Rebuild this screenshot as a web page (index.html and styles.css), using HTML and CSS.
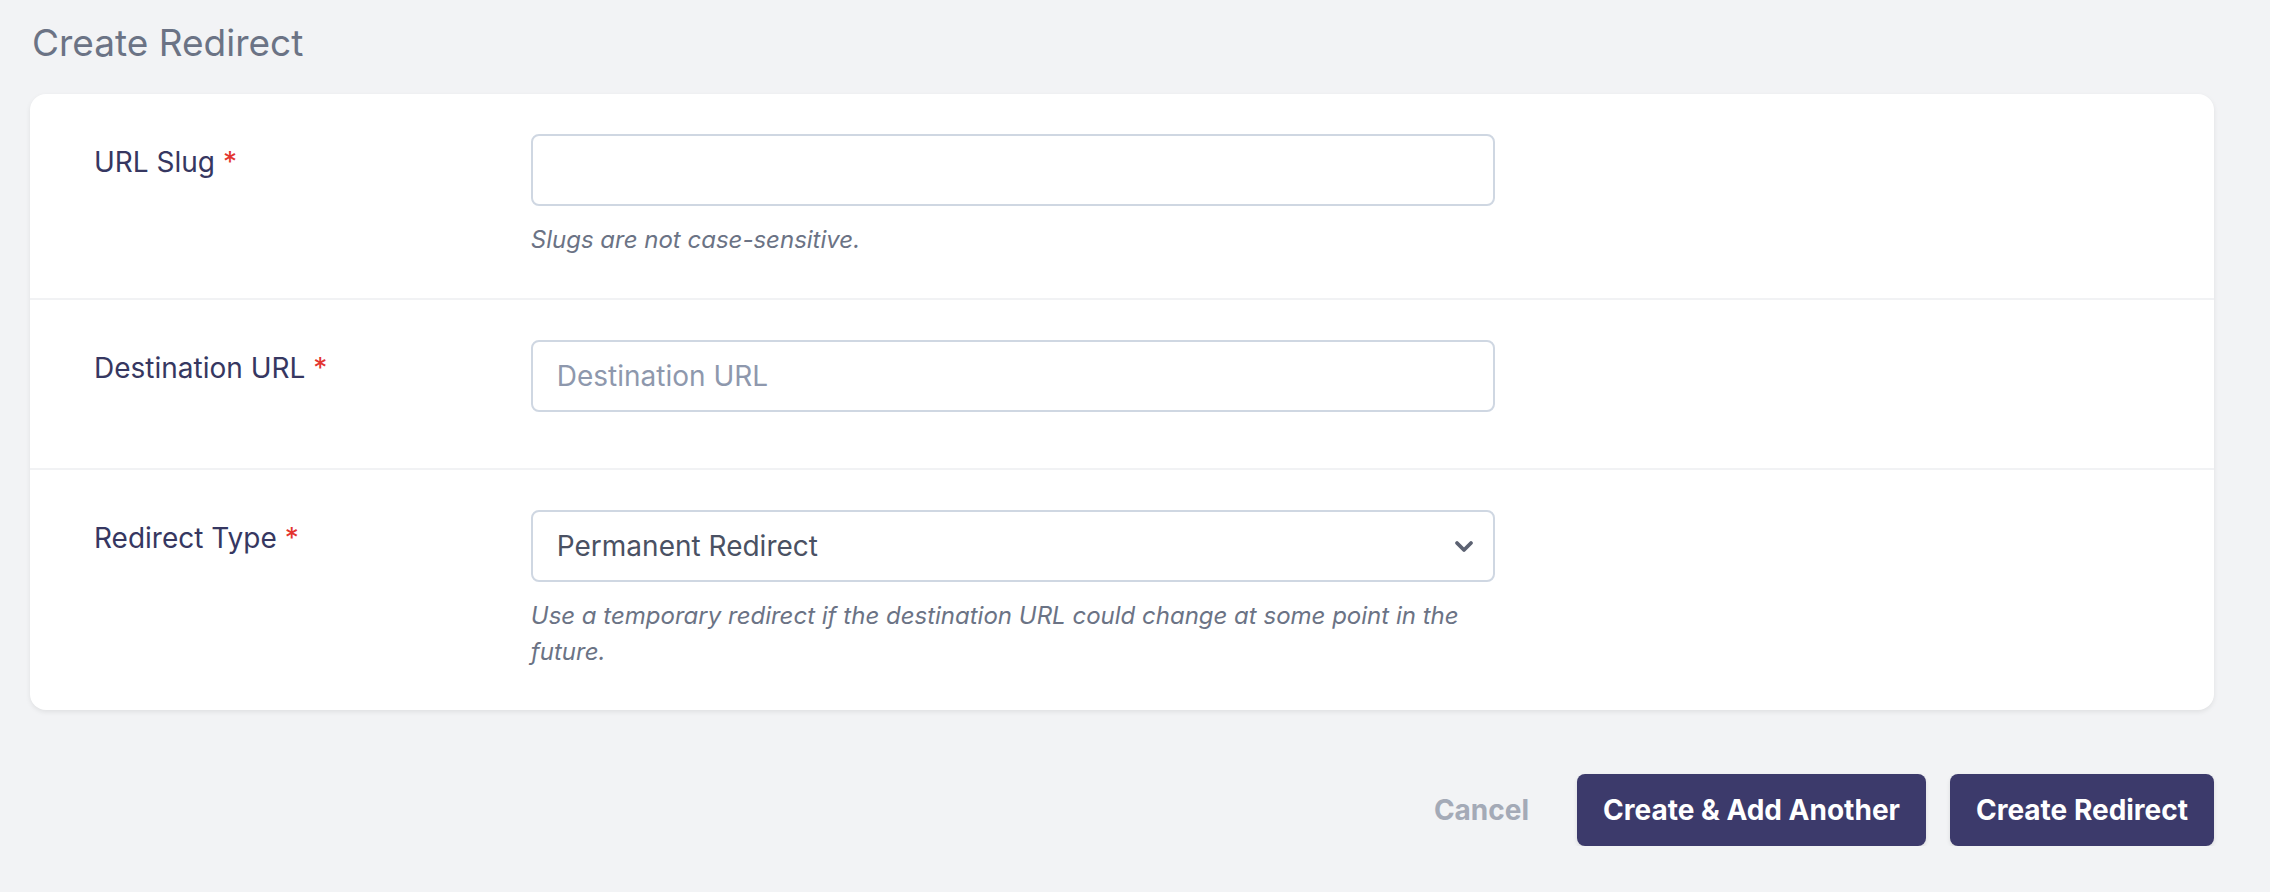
FILE: index.html
```html
<!DOCTYPE html>
<html lang="en">
<head>
  <meta charset="UTF-8" />
  <meta name="viewport" content="width=device-width, initial-scale=1.0"/>
  <title>Create Redirect</title>
  <link rel="stylesheet" href="styles.css">
</head>
<body>
  <div class="page">
    <h1 class="heading">Create Redirect</h1>

    <form class="card" id="redirectForm">
      <!-- Slug -->
      <div class="field-row">
        <div class="field-label">
          <label for="slug">URL Slug <span class="required">*</span></label>
        </div>
        <div class="field-body">
          <input type="text" id="slug" name="slug" class="form-input" />
          <p class="help-text">Slugs are not case-sensitive.</p>
        </div>
      </div>

      <!-- Destination -->
      <div class="field-row field-row--plain">
        <div class="field-label">
          <label for="destination">Destination URL <span class="required">*</span></label>
        </div>
        <div class="field-body">
          <input type="text" id="destination" name="destination" class="form-input" placeholder="Destination URL" />
        </div>
      </div>

      <!-- Type -->
      <div class="field-row">
        <div class="field-label">
          <label for="type">Redirect Type <span class="required">*</span></label>
        </div>
        <div class="field-body">
          <div class="select-wrap">
            <select id="type" name="type" class="form-input form-select">
              <option value="301" selected>Permanent Redirect</option>
              <option value="302">Temporary Redirect</option>
            </select>
            <svg class="select-arrow" width="20" height="13" viewBox="0 0 20 13" aria-hidden="true">
              <polyline points="3,3 10,10 17,3" fill="none" stroke="currentColor" stroke-width="3.8" stroke-linecap="round" stroke-linejoin="round"/>
            </svg>
          </div>
          <p class="help-text">Use a temporary redirect if the destination URL could change at some point in the future.</p>
        </div>
      </div>
    </form>

    <div class="actions">
      <a href="#" class="btn-link">Cancel</a>
      <button type="submit" form="redirectForm" class="btn">Create &amp; Add Another</button>
      <button type="submit" form="redirectForm" class="btn">Create Redirect</button>
    </div>
  </div>
</body>
</html>
```

FILE: styles.css
```css
* {
  margin: 0;
  padding: 0;
  box-sizing: border-box;
}

body {
  font-family: Inter, "Noto Sans", sans-serif;
  background-color: #f2f3f5;
  color: #363761;
}

.page {
  padding: 20px 56px 0 30px;
}

.heading {
  font-size: 37px;
  line-height: 46px;
  font-weight: 400;
  color: #6b7385;
  padding-left: 2px;
  margin-bottom: 28px;
}

.card {
  background: white;
  border-radius: 16px;
  box-shadow: 0 2px 5px rgba(0,0,0,0.08);
  overflow: hidden;
}

.field-row {
  display: flex;
  padding: 40px 0;
  border-bottom: 2px solid #f1f2f4;
}

.field-row:last-child {
  border-bottom: none;
}

.field-row--plain {
  padding-bottom: 56px;
}

.field-label {
  width: 20%;
  padding-left: 64px;
  padding-top: 11px;
}

.field-label label {
  font-size: 28px;
  line-height: 35px;
  color: #363761;
}

.required {
  color: #e3342f;
}

.field-body {
  width: 50%;
  padding: 0 64px;
}

.form-input {
  display: block;
  width: 100%;
  height: 72px;
  padding: 0 24px;
  font-family: inherit;
  font-size: 28px;
  color: #4a5163;
  background: white;
  border: 2px solid #cfd7e2;
  border-radius: 8px;
  outline: none;
}

.form-input::placeholder {
  color: #8e98ad;
}

.select-wrap {
  position: relative;
}

.form-select {
  appearance: none;
  -webkit-appearance: none;
  padding-right: 60px;
}

.select-arrow {
  position: absolute;
  right: 21px;
  top: 30px;
  color: #5c6272;
  pointer-events: none;
}

.help-text {
  margin-top: 16px;
  font-size: 24px;
  line-height: 36px;
  font-style: italic;
  color: #6b7385;
}

.actions {
  display: flex;
  justify-content: flex-end;
  align-items: center;
  margin-top: 64px;
}

.btn-link {
  font-size: 28px;
  font-weight: 700;
  color: #a4aab7;
  text-decoration: none;
  margin-right: 48px;
}

.btn {
  height: 72px;
  padding: 0 26px;
  margin-left: 24px;
  font-family: inherit;
  font-size: 28px;
  font-weight: 700;
  color: white;
  background: #3c3a6b;
  border: none;
  border-radius: 8px;
  box-shadow: 0 2px 4px rgba(0,0,0,0.1);
  cursor: pointer;
}

.btn-link + .btn {
  margin-left: 0;
}
```
